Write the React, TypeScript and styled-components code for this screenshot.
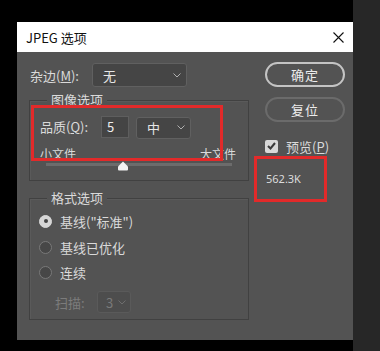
import React from "react";
import styled, {createGlobalStyle} from "styled-components";

const GlobalStyle = createGlobalStyle`
  html, body {
    margin: 0;
    padding: 0;
    background: #000;
  }
  body {
    font-family: "Noto Sans CJK SC", "Noto Sans", sans-serif;
  }
`

const Page = styled.div`
  display: flex;
  width: 380px;
  height: 351px;
  background: #000;
  overflow: hidden;
`
const Stage = styled.div`
  width: 353px;
  padding: 22px 0 0 17px;
  box-sizing: border-box;
`
const SideStrip = styled.div`
  flex: 1;
  background: #272727;
`

const Dialog = styled.div`
  width: 336px;
  height: 318px;
  display: flex;
  flex-direction: column;
  background: #535353;
`
const TitleBar = styled.div`
  display: flex;
  align-items: center;
  height: 30px;
  padding: 0 9px 0 9px;
  background: #fff;
  color: #111;
  font-size: 13px;
`
const TitleText = styled.div`
  flex: 1;
`
const Body = styled.div`
  display: flex;
  padding: 11px 0 0 12px;
  color: #dadada;
  font-size: 13px;
`
const LeftCol = styled.div`
  width: 220px;
  display: flex;
  flex-direction: column;
`
const RightCol = styled.div`
  display: flex;
  flex-direction: column;
  margin-left: 5px;
`

const Row = styled.div<{ $h?: number }>`
  display: flex;
  align-items: center;
  height: ${p => p.$h ?? 24}px;
`
const Label = styled.span<{ $w?: number; $dim?: boolean }>`
  width: ${p => (p.$w ? `${p.$w}px` : "auto")};
  color: ${p => (p.$dim ? "#7c7c7c" : "#dadada")};
  white-space: nowrap;
`

const Select = styled.div<{ $w: number; $h?: number; $dim?: boolean }>`
  display: flex;
  align-items: center;
  box-sizing: border-box;
  width: ${p => p.$w}px;
  height: ${p => p.$h ?? 22}px;
  padding: 0 5px 0 10px;
  border: 1px solid ${p => (p.$dim ? "#5a5a5a" : "#606060")};
  border-radius: 3px;
  background: ${p => (p.$dim ? "#4d4d4d" : "#454545")};
  color: ${p => (p.$dim ? "#7a7a7a" : "#e6e6e6")};
  span {
    flex: 1;
  }
`
const Input = styled.div`
  display: flex;
  align-items: center;
  box-sizing: border-box;
  width: 28px;
  height: 22px;
  padding-left: 5px;
  border: 1px solid #5e5e5e;
  background: #444;
  color: #eee;
`

const Group = styled.div<{ $mt: number }>`
  position: relative;
  margin-top: ${p => p.$mt}px;
  border: 1px solid #414141;
  box-shadow: inset 1px 1px 0 #5a5a5a;
`
const Legend = styled.span`
  position: absolute;
  top: -9px;
  left: 17px;
  padding: 0 4px;
  background: #535353;
  color: #dadada;
  line-height: 16px;
`

const Mark = styled.div`
  position: absolute;
  border: 3px solid #e22a2a;
  pointer-events: none;
`

const SliderLabels = styled.div`
  display: flex;
  justify-content: space-between;
  margin: 9px 12px 0 10px;
  height: 14px;
  line-height: 14px;
  font-size: 12px;
`
const Track = styled.div`
  position: relative;
  height: 3px;
  margin: 2px 16px 14px 16px;
  background: #6c6c6c;
`
const Thumb = styled.svg`
  position: absolute;
  top: -2px;
  left: 71px;
`

const RadioRow = styled.div<{ $h: number }>`
  display: flex;
  align-items: center;
  gap: 8px;
  height: ${p => p.$h}px;
  padding-left: 9px;
`
const Radio = styled.div<{ $on?: boolean }>`
  box-sizing: border-box;
  width: 13px;
  height: 13px;
  border-radius: 50%;
  border: 1px solid ${p => (p.$on ? "#d8d8d8" : "#797979")};
  background: ${p => (p.$on ? "#d6d6d6" : "#474747")};
  display: flex;
  align-items: center;
  justify-content: center;
  &::after {
    content: "";
    display: ${p => (p.$on ? "block" : "none")};
    width: 4px;
    height: 4px;
    border-radius: 50%;
    background: #444;
  }
`

const Button = styled.div<{ $primary?: boolean; $mt: number }>`
  display: flex;
  align-items: center;
  justify-content: center;
  box-sizing: border-box;
  width: 80px;
  height: 25px;
  margin: ${p => p.$mt}px 0 0 11px;
  border: 2px solid ${p => (p.$primary ? "#c4c4c4" : "#6b6b6b")};
  border-radius: 13px;
  color: #ececec;
  font-size: 13px;
  letter-spacing: 1px;
`
const CheckRow = styled.div`
  display: flex;
  align-items: center;
  gap: 8px;
  height: 14px;
  margin: 17px 0 0 11px;
`
const CheckBox = styled.div`
  display: flex;
  align-items: center;
  justify-content: center;
  width: 13px;
  height: 13px;
  border-radius: 2px;
  background: #d8d8d8;
`
const SizeBox = styled.div`
  box-sizing: border-box;
  width: 73px;
  height: 46px;
  margin-top: 3px;
  padding: 12px 0 0 9px;
  border: 3px solid #e22a2a;
  color: #dcdcdc;
  font-size: 11px;
  font-family: "Noto Sans", sans-serif;
`

const Chevron = ({color = "#b0b0b0"}: { color?: string }) => (
  <svg width="8" height="5" viewBox="0 0 8 5">
    <path d="M0.5 0.5L4 4L7.5 0.5" stroke={color} strokeWidth="1" fill="none"/>
  </svg>
)

const App = () => {
  return (
    <>
      <GlobalStyle/>
      <Page>
        <Stage>
          <Dialog>
            <TitleBar>
              <TitleText>JPEG 选项</TitleText>
              <svg width="11" height="11" viewBox="0 0 11 11">
                <path d="M0.5 0.5L10.5 10.5M10.5 0.5L0.5 10.5" stroke="#111" strokeWidth="1.1"/>
              </svg>
            </TitleBar>
            <Body>
              <LeftCol>
                <Row style={{paddingLeft: 1}}>
                  <Label $w={62}>杂边(<u>M</u>):</Label>
                  <Select $w={95} $h={24}>
                    <span>无</span>
                    <Chevron/>
                  </Select>
                </Row>

                <Group $mt={13}>
                  <Legend>图像选项</Legend>
                  <Mark style={{left: 1, top: 4, width: 186, height: 50}}/>
                  <Row $h={23} style={{marginTop: 14, paddingLeft: 10}}>
                    <Label $w={61}>品质(<u>Q</u>):</Label>
                    <Input>5</Input>
                    <Select $w={55} style={{marginLeft: 7, marginTop: 2}}>
                      <span>中</span>
                      <Chevron/>
                    </Select>
                  </Row>
                  <SliderLabels>
                    <span>小文件</span>
                    <span>大文件</span>
                  </SliderLabels>
                  <Track>
                    <Thumb width="12" height="10" viewBox="0 0 12 10">
                      <path d="M6 0.5L11 5.5V8.5Q11 9.5 10 9.5H2Q1 9.5 1 8.5V5.5Z" fill="#f2f2f2"/>
                    </Thumb>
                  </Track>
                </Group>

                <Group $mt={17} style={{paddingBottom: 6, paddingTop: 9}}>
                  <Legend>格式选项</Legend>
                  <RadioRow $h={26}>
                    <Radio $on/>
                    <Label>基线("标准")</Label>
                  </RadioRow>
                  <RadioRow $h={26}>
                    <Radio/>
                    <Label>基线已优化</Label>
                  </RadioRow>
                  <RadioRow $h={25}>
                    <Radio/>
                    <Label>连续</Label>
                  </RadioRow>
                  <Row $h={22} style={{marginTop: 6, paddingLeft: 25}}>
                    <Label $w={42} $dim>扫描:</Label>
                    <Select $w={34} $dim style={{paddingLeft: 8, paddingRight: 4}}>
                      <span>3</span>
                      <Chevron color="#6e6e6e"/>
                    </Select>
                  </Row>
                </Group>
              </LeftCol>

              <RightCol>
                <Button $primary $mt={-1}>确定</Button>
                <Button $mt={10}>复位</Button>
                <CheckRow>
                  <CheckBox>
                    <svg width="9" height="8" viewBox="0 0 9 8">
                      <path d="M1 4L3.5 6.5L8 1" stroke="#3a3a3a" strokeWidth="2" fill="none"/>
                    </svg>
                  </CheckBox>
                  <Label>预览(<u>P</u>)</Label>
                </CheckRow>
                <SizeBox>562.3K</SizeBox>
              </RightCol>
            </Body>
          </Dialog>
        </Stage>
        <SideStrip/>
      </Page>
    </>
  )
}

export default App
